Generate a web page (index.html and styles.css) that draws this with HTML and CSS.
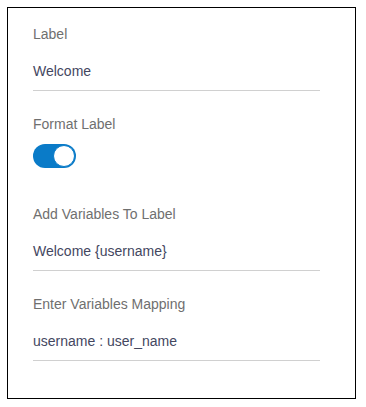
FILE: index.html
```html
<!DOCTYPE html>
<html lang="en">
<head>
    <meta charset="UTF-8">
    <meta name="viewport" content="width=device-width, initial-scale=1.0">
    <title>Label Settings</title>
    <link rel="stylesheet" href="styles.css">
</head>
<body>
    <div class="panel">
        <!-- label -->
        <div class="field">
            <div class="field-label">Label</div>
            <div class="field-value">Welcome</div>
        </div>
        <!-- format toggle -->
        <div class="field toggle-field">
            <div class="field-label">Format Label</div>
            <div class="toggle on">
                <div class="knob"></div>
            </div>
        </div>
        <!-- variables -->
        <div class="field">
            <div class="field-label">Add Variables To Label</div>
            <div class="field-value">Welcome {username}</div>
        </div>
        <div class="field">
            <div class="field-label">Enter Variables Mapping</div>
            <div class="field-value">username : user_name</div>
        </div>
    </div>
</body>
</html>
```

FILE: styles.css
```css
body {
    margin: 7px;
    background: #fff;
    font-family: "Liberation Sans", Arial, sans-serif;
}
.panel {
    width: 322px;
    height: 372px;
    border: 1px solid #000;
    padding: 18px 0 0 25px;
}
.field {
    width: 287px;
    margin-bottom: 25px;
}
.toggle-field {
    margin-bottom: 38px;
}
.field-label {
    font-size: 14px;
    line-height: 16px;
    color: #6f6f6f;
    margin-bottom: 21px;
}
.field-value {
    font-size: 14px;
    line-height: 16px;
    color: #44475f;
    padding-bottom: 11px;
    border-bottom: 1px solid #d0d0d0;
}
.toggle {
    width: 43px;
    height: 24px;
    border-radius: 12px;
    background: #0a7bc8;
    display: flex;
    align-items: center;
    justify-content: flex-end;
    padding: 0 1px;
    box-sizing: border-box;
    margin-top: -9px;
}
.knob {
    width: 20px;
    height: 20px;
    border-radius: 50%;
    background: #fff;
    border: 1px solid #0a7bc8;
}
```
